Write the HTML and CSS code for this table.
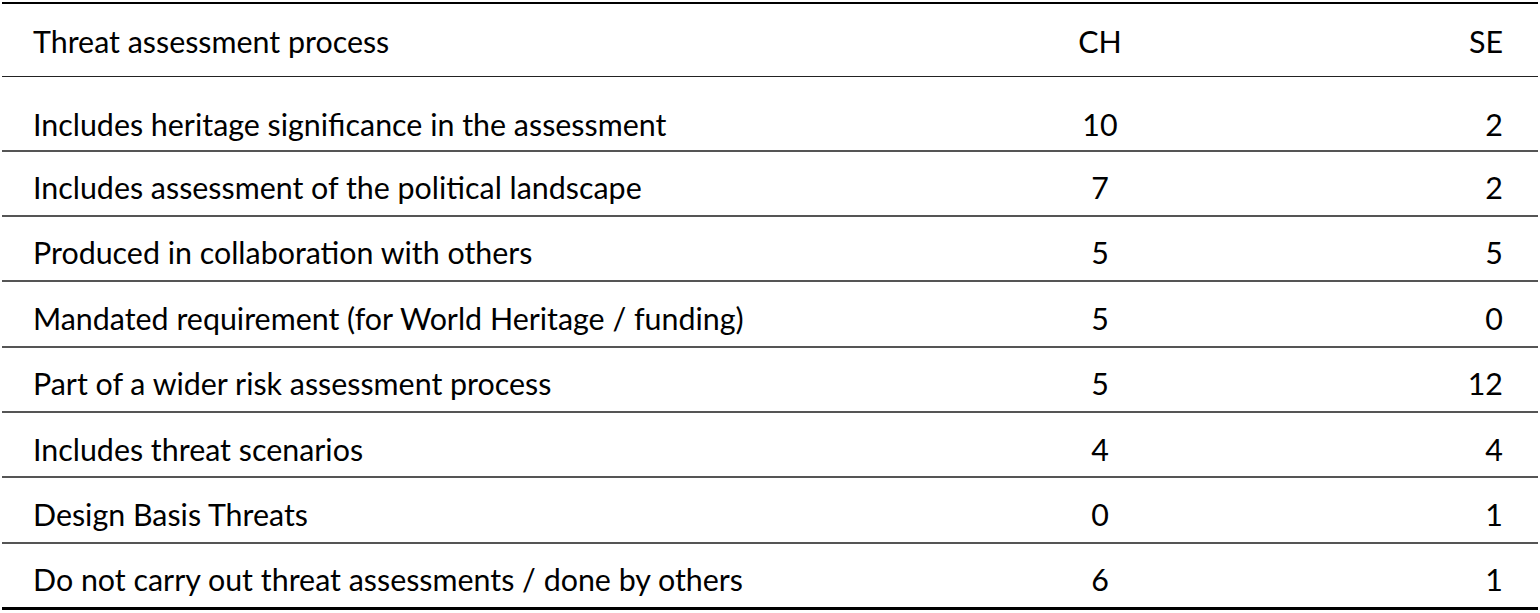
FILE: index.html
```html
<!DOCTYPE html>
<html>
<head>
<meta charset="utf-8">
<link rel="stylesheet" href="styles.css">
</head>
<body>
<div class="wrap">
<table class="data">
  <colgroup>
    <col class="c-label">
    <col class="c-ch">
    <col class="c-se">
  </colgroup>
  <thead>
    <tr><th class="label">Threat assessment process</th><th class="ch">CH</th><th class="se">SE</th></tr>
  </thead>
  <tbody>
    <tr class="first"><td class="label">Includes heritage significance in the assessment</td><td class="ch">10</td><td class="se">2</td></tr>
    <tr><td class="label">Includes assessment of the political landscape</td><td class="ch">7</td><td class="se">2</td></tr>
    <tr><td class="label">Produced in collaboration with others</td><td class="ch">5</td><td class="se">5</td></tr>
    <tr><td class="label">Mandated requirement (for World Heritage / funding)</td><td class="ch">5</td><td class="se">0</td></tr>
    <tr><td class="label">Part of a wider risk assessment process</td><td class="ch">5</td><td class="se">12</td></tr>
    <tr><td class="label">Includes threat scenarios</td><td class="ch">4</td><td class="se">4</td></tr>
    <tr><td class="label">Design Basis Threats</td><td class="ch">0</td><td class="se">1</td></tr>
    <tr class="last"><td class="label">Do not carry out threat assessments / done by others</td><td class="ch">6</td><td class="se">1</td></tr>
  </tbody>
</table>
</div>
</body>
</html>
```
FILE: styles.css
```css
html, body {
  margin: 0;
  padding: 0;
  background: #fff;
}
.wrap {
  padding: 2px 2px 0 2px;
}
.data {
  width: 1536px;
  border-collapse: collapse;
  table-layout: fixed;
  font-family: "Lato", "Open Sans", sans-serif;
  font-size: 30.4px;
  color: #000;
  border-top: 2px solid #000;
}
.c-label { width: 998px; }
.c-ch { width: 200px; }
.c-se { width: 338px; }
.data th, .data td {
  font-weight: normal;
  padding: 0;
  vertical-align: middle;
  line-height: 1;
}
.data thead th {
  height: 73px;
  padding-top: 2px;
  box-sizing: border-box;
  border-bottom: 1px solid #222;
}
.data tbody td {
  height: 55.4px;
  padding-top: 8px;
  border-bottom: 2px solid #555;
}
.data tbody tr.first td {
  height: 51px;
  padding-top: 22px;
}
.data tbody tr.last td {
  border-bottom: 3px solid #000;
}
.label {
  text-align: left;
  padding-left: 31px !important;
}
.ch {
  text-align: center;
}
.se {
  text-align: right;
  padding-right: 35px !important;
}
```
